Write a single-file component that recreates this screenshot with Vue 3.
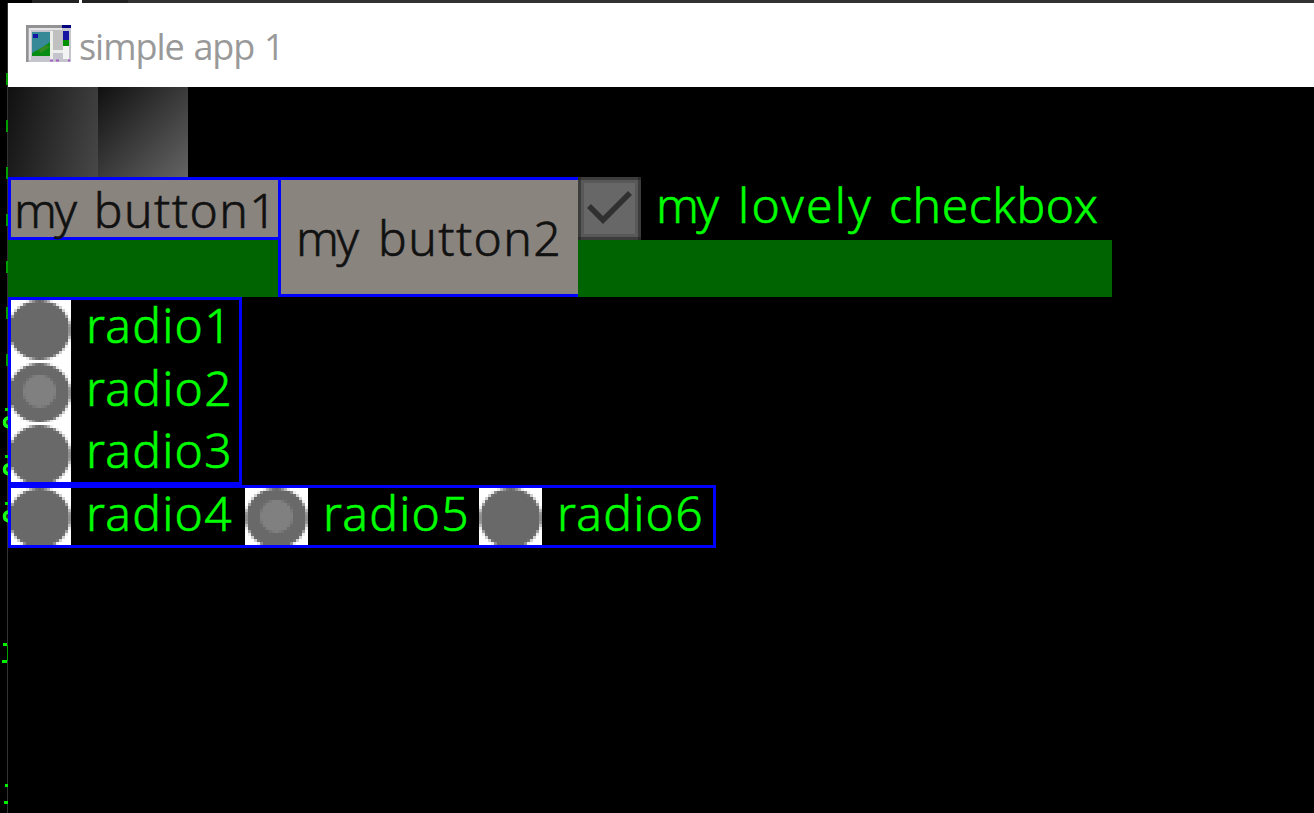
<script setup>
const cell = 3
const n = 21
function disc(cx, cy, rx, ry) {
  const out = []
  for (let y = 0; y < n; y++) {
    for (let x = 0; x < n; x++) {
      let hit = 0
      for (let a = 0; a < 4; a++) {
        for (let b = 0; b < 4; b++) {
          const dx = (x + (a + 0.5) / 4 - cx) / rx
          const dy = (y + (b + 0.5) / 4 - cy) / ry
          if (dx * dx + dy * dy <= 1) hit++
        }
      }
      if (hit) out.push({ x: x * cell, y: y * cell, o: hit / 16 })
    }
  }
  return out
}
const outer = disc(10.5, 11, 10.3, 9.95)
const inner = disc(10.5, 10.4, 5.5, 5.5)
const column = [
  { n: 1, on: false },
  { n: 2, on: true },
  { n: 3, on: false },
]
const row = [
  { n: 4, on: false },
  { n: 5, on: true },
  { n: 6, on: false },
]
const ticks = [73, 120, 167, 214, 261, 307, 354]
const curls = [409, 456, 503]
const dashes = [
  { x: 3, y: 643, w: 4 },
  { x: 2, y: 660, w: 5 },
  { x: 5, y: 784, w: 3 },
  { x: 4, y: 801, w: 4 },
]
</script>

<template>
  <div class="desktop">
    <svg class="behind" width="8" height="813" viewBox="0 0 8 813">
      <rect v-for="t in ticks" :key="t" x="6" :y="t" width="2" height="12" fill="#00a000" />
      <g v-for="c in curls" :key="c">
        <rect x="5" :y="c - 1" width="3" height="3" fill="#00e000" />
        <path :d="`M9 ${c + 9}C3 ${c + 9} 3 ${c + 17} 9 ${c + 18}`" fill="none" stroke="#1aff1a" stroke-width="3.500" />
      </g>
      <rect v-for="d in dashes" :key="d.y" :x="d.x" :y="d.y" :width="d.w" height="3" fill="#00f000" />
      <rect x="7" y="645" width="1" height="16" fill="#00a000" />
    </svg>
    <div class="strip"><i class="dark"></i><i class="caret"></i><i class="dark two"></i><i class="light"></i></div>
    <main class="window">
      <header>
        <svg class="appicon" width="46" height="38" viewBox="0 0 46 38">
          <rect width="45" height="37" fill="#c4c4cc" />
          <path d="M1 37V1.500H36" fill="none" stroke="#929294" stroke-width="3" />
          <path d="M4 35V4H36" fill="none" stroke="#e4e4e6" stroke-width="2" />
          <rect x="26" y="5" width="11" height="20" fill="#c0c0c0" />
          <rect x="6" y="7" width="18" height="24" fill="#378998" />
          <path d="M6 31V28L17 22L24 17V31Z" fill="#078d13" />
          <path d="M12 25L20 20L24 22L15 28Z" fill="#348b22" />
          <rect x="7" y="9" width="5" height="4" fill="#1414a8" />
          <rect x="24" y="6" width="3" height="29" fill="#eeeee8" />
          <rect x="27" y="25" width="10" height="3" fill="#ededed" />
          <rect x="36" y="0" width="9" height="3" fill="#000080" />
          <rect x="37" y="6" width="6" height="10" fill="#1515a2" />
          <rect x="37" y="15" width="6" height="6" fill="#009000" />
          <rect x="37" y="21" width="6" height="13" fill="#f3f3f3" />
          <path d="M24 35.500h3M30 35.500h3M42 35.500h2" stroke="#a65cc9" stroke-width="2" />
        </svg>
        <span class="title">simple app 1</span>
      </header>
      <div class="tiles"><i></i><i></i></div>
      <section class="controls">
        <div class="btn one"><span class="my">my</span><span class="word">button1</span></div>
        <div class="btn two"><span class="my">my</span><span class="word">button2</span></div>
        <div class="check">
          <svg width="63" height="63" viewBox="0 0 63 63">
            <rect width="63" height="63" fill="#3c3c3c" />
            <path d="M0 0h3v3h-3zM60 0h3v3h-3zM0 60h3v3h-3zM60 60h3v3h-3z" fill="#2c2c2c" />
            <rect x="3" y="3" width="57" height="57" fill="#585858" />
            <rect x="6" y="6" width="51" height="51" fill="#676767" />
            <path d="M11 29L25 43L52 16" fill="none" stroke="#303030" stroke-width="5.500" />
          </svg>
          <span class="my">my</span><span class="lovely">lovely</span><span class="cb">checkbox</span>
        </div>
      </section>
      <section class="group column">
        <div v-for="r in column" :key="r.n" class="radio">
          <svg width="63" height="63" viewBox="0 0 63 63" shape-rendering="crispEdges">
            <rect width="63" height="63" fill="#fff" />
            <rect v-for="(p, i) in outer" :key="i" :x="p.x" :y="p.y" width="3" height="3" fill="#696969" :fill-opacity="p.o" />
            <template v-if="r.on">
              <rect v-for="(p, i) in inner" :key="i" :x="p.x" :y="p.y" width="3" height="3" fill="#808080" :fill-opacity="p.o" />
            </template>
          </svg>
          <span>radio{{ r.n }}</span>
        </div>
      </section>
      <section class="group row">
        <div v-for="r in row" :key="r.n" class="radio">
          <svg width="63" height="63" viewBox="0 0 63 63" shape-rendering="crispEdges">
            <rect width="63" height="63" fill="#fff" />
            <rect v-for="(p, i) in outer" :key="i" :x="p.x" :y="p.y" width="3" height="3" fill="#696969" :fill-opacity="p.o" />
            <template v-if="r.on">
              <rect v-for="(p, i) in inner" :key="i" :x="p.x" :y="p.y" width="3" height="3" fill="#808080" :fill-opacity="p.o" />
            </template>
          </svg>
          <span>radio{{ r.n }}</span>
        </div>
      </section>
    </main>
  </div>
</template>

<style>
body { background: #000; overflow: hidden; }
</style>

<style scoped>
.desktop { width: 1314px; height: 813px; background: #000; display: grid; grid-template: 3px 1fr / 7px 1fr; overflow: hidden; position: relative; }
.behind { position: absolute; left: 0; top: 0; }
.strip { grid-column: 1 / 3; display: flex; height: 3px; padding-left: 32px; }
.strip i { height: 3px; }
.dark { width: 47px; background: #222; }
.dark.two { width: 46px; }
.caret { width: 3px; background: #fff; }
.light { flex: 1; background: #333; }
.window { grid-column: 2; border-left: 1px solid #333; font-family: "Noto Sans", sans-serif; font-weight: 300; font-size: 48px; white-space: nowrap; }
header { height: 84px; background: #fff; display: flex; align-items: center; }
.appicon { margin: 0 7px 2px 18px; filter: blur(0.500px); }
.title { font: 400 36px/84px "Open Sans", sans-serif; color: #999; padding-top: 4px; letter-spacing: -1.050px; word-spacing: 1.500px; }
.tiles { display: flex; height: 90px; }
.tiles i { width: 90px; background: linear-gradient(105deg, #101010, #484848); }
.tiles i + i { background: linear-gradient(135deg, #101010, #646464); }
.controls { width: 1104px; height: 120px; background: #006400; display: flex; align-items: flex-start; }
.controls span, .radio span { -webkit-text-stroke: 0.600px currentColor; }
.btn { box-sizing: border-box; border: 3px solid #00f; border-right: 0; background: #8a847f; color: #111; display: flex; }
.one { width: 270px; height: 63px; line-height: 60px; padding-left: 3px; }
.two { width: 300px; height: 120px; line-height: 115px; }
.btn.two { padding-left: 15px; }
.word { letter-spacing: 1.400px; }
.my { width: 82px; letter-spacing: -2.500px; }
.check { flex: 1; height: 63px; background: #000; color: #0f0; display: flex; line-height: 55px; }
.check svg { margin-right: 15px; }
.lovely { width: 151px; letter-spacing: 2.300px; }
.cb { letter-spacing: 0.600px; }
.group { box-sizing: border-box; border: 3px solid #00f; color: #0f0; display: flex; }
.column { width: 234px; height: 188px; flex-direction: column; }
.row { width: 708px; height: 63px; }
.radio { display: flex; flex-shrink: 0; line-height: 49px; letter-spacing: 1.250px; }
.radio svg { margin: -3px 15px 0 0; flex-shrink: 0; }
.column .radio { height: 62.500px; margin-left: -3px; }
.column .radio svg { clip-path: inset(0 0 0 3px); }
.column .radio:first-child svg { clip-path: inset(3px 0 0 3px); }
.column .radio:last-child svg { clip-path: inset(0 0 3px 3px); }
.row .radio { width: 234px; }
.row .radio svg { clip-path: inset(3px 0 3px 0); }
.row .radio:first-child { margin-left: -3px; width: 237px; }
.row .radio:first-child svg { clip-path: inset(3px 0 3px 3px); }
</style>
